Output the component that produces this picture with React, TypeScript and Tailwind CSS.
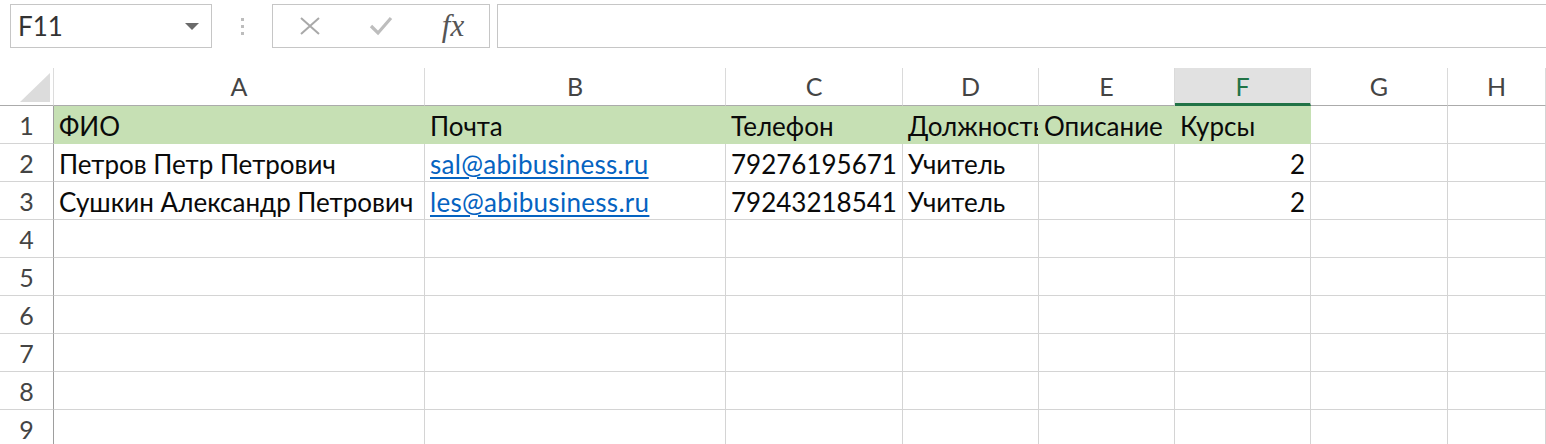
import React from "react";

const FONT = { fontFamily: "Lato, 'Noto Sans', sans-serif" } as const;

const cols = [
  { key: "A", w: "w-[371px]" },
  { key: "B", w: "w-[301px]" },
  { key: "C", w: "w-[177px]" },
  { key: "D", w: "w-[136px]" },
  { key: "E", w: "w-[136px]" },
  { key: "F", w: "w-[136px]" },
  { key: "G", w: "w-[137px]" },
  { key: "H", w: "flex-1" },
];

type Cell = { text?: string; link?: boolean; right?: boolean };

const data: Cell[][] = [
  [
    { text: "ФИО" },
    { text: "Почта" },
    { text: "Телефон" },
    { text: "Должность" },
    { text: "Описание" },
    { text: "Курсы" },
  ],
  [
    { text: "Петров Петр Петрович" },
    { text: "sal@abibusiness.ru", link: true },
    { text: "79276195671" },
    { text: "Учитель" },
    {},
    { text: "2", right: true },
  ],
  [
    { text: "Сушкин Александр Петрович" },
    { text: "les@abibusiness.ru", link: true },
    { text: "79243218541" },
    { text: "Учитель" },
    {},
    { text: "2", right: true },
  ],
];

function Toolbar() {
  return (
    <div className="flex h-[68px] items-start bg-white pt-[4px]">
      <div className="ml-[10px] flex h-[44px] w-[202px] items-center justify-between border border-[#c6c6c6] bg-white pl-[7px] pr-[12px]">
        <span className="text-[26px] text-[#333]" style={FONT}>
          F11
        </span>
        <svg width="14" height="7" viewBox="0 0 14 7">
          <path d="M0 0 L14 0 L7 7 Z" fill="#6a6a6a" />
        </svg>
      </div>
      <div className="flex h-[44px] w-[60px] flex-col items-center justify-center gap-[4px]">
        <div className="h-[3px] w-[3px] bg-[#bdbdbd]" />
        <div className="h-[3px] w-[3px] bg-[#bdbdbd]" />
        <div className="h-[3px] w-[3px] bg-[#bdbdbd]" />
      </div>
      <div className="flex h-[44px] w-[218px] items-center border border-[#c6c6c6] bg-white">
        <div className="flex w-[72px] justify-center pl-[2px]">
          <svg width="22" height="18" viewBox="0 0 22 18">
            <path d="M2 1 L20 17 M20 1 L2 17" stroke="#a9a9a9" strokeWidth="2" />
          </svg>
        </div>
        <div className="flex w-[72px] justify-center">
          <svg width="24" height="20" viewBox="0 0 24 20">
            <path d="M2 10 L9 17 L22 2" stroke="#bdbdbd" strokeWidth="3.2" fill="none" />
          </svg>
        </div>
        <div className="flex w-[72px] justify-center pb-[2px]">
          <span
            className="text-[31px] italic leading-none text-[#555]"
            style={{ fontFamily: "'Liberation Serif', 'DejaVu Serif', serif" }}
          >
            fx
          </span>
        </div>
      </div>
      <div className="ml-[7px] h-[44px] flex-1 border border-r-0 border-[#c6c6c6] bg-white" />
    </div>
  );
}

function HeaderRow() {
  return (
    <div className="flex h-[38px]">
      <div className="relative w-[54px] shrink-0 border-b border-r border-b-[#ababab] border-r-[#dcdcdc]">
        <svg className="absolute left-[20px] top-[5px]" width="30" height="29" viewBox="0 0 30 29">
          <path d="M30 0 L30 29 L0 29 Z" fill="#dcdcdc" />
        </svg>
      </div>
      {cols.map((c) => {
        const sel = c.key === "F";
        return (
          <div
            key={c.key}
            className={`${c.w} flex shrink-0 items-center justify-center ${
              sel
                ? "border-b-[3px] border-r border-b-[#217346] border-r-[#dadada] bg-[#e1e1e1] pt-[2px] text-[#217346]"
                : "border-b border-r border-b-[#ababab] border-r-[#dadada] text-[#444]"
            } text-[25px]`}
            style={FONT}
          >
            {c.key}
          </div>
        );
      })}
    </div>
  );
}

function Row({ n, cells }: { n: number; cells: Cell[] }) {
  const green = n === 1;
  return (
    <div className="flex h-[38px]">
      <div
        className="flex w-[54px] shrink-0 items-center justify-center border-b border-r border-b-[#d4d4d4] border-r-[#9e9e9e] pt-[2px] text-[25px] text-[#444]"
        style={FONT}
      >
        {n}
      </div>
      {cols.map((c, i) => {
        const cell = cells[i] || {};
        const isGreen = green && i < 6;
        return (
          <div
            key={c.key}
            className={`${c.w} flex shrink-0 items-center overflow-hidden whitespace-nowrap border-b border-r px-[5px] pt-[3px] text-[26px] ${
              isGreen ? "border-[#c6e0b4] bg-[#c6e0b4]" : "border-[#d4d4d4] bg-white"
            } ${cell.right ? "justify-end" : "justify-start"} ${
              cell.link
                ? "tracking-[0.3px] text-[#0563c1] underline decoration-[1.5px] underline-offset-[3px]"
                : "text-[#0a0a0a]"
            }`}
            style={FONT}
          >
            {cell.text}
          </div>
        );
      })}
    </div>
  );
}

export default function App() {
  return (
    <div className="h-[444px] w-[1546px] overflow-hidden bg-white">
      <Toolbar />
      <HeaderRow />
      {Array.from({ length: 9 }, (_, i) => (
        <Row key={i} n={i + 1} cells={data[i] || []} />
      ))}
    </div>
  );
}
